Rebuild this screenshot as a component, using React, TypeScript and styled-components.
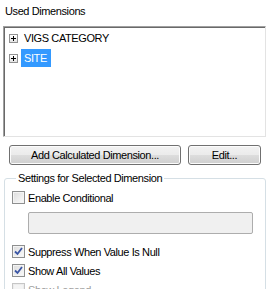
import React from "react";
import styled, {createGlobalStyle} from "styled-components";

const GlobalStyle = createGlobalStyle`
  body {
    margin: 0;
    background: #fff;
    font-family: "Liberation Sans", Arial, sans-serif;
    font-size: 11px;
    letter-spacing: -0.4px;
    color: #000;
  }
`;

const Panel = styled.div`
  width: 275px;
  height: 289px;
  overflow: hidden;
  padding-top: 5px;
  box-sizing: border-box;
`;

const Title = styled.div`
  padding-left: 5px;
  line-height: 13px;
  height: 13px;
`;

const ListBox = styled.div`
  margin: 8px 0 0 3px;
  width: 263px;
  height: 111px;
  box-sizing: border-box;
  border: 1px solid;
  border-color: #a0a0a0 #e3e3e3 #e3e3e3 #a0a0a0;
  box-shadow: inset 1px 1px 0 #696969;
  padding: 1px 0 0 1px;
`;

const TreeRow = styled.div`
  display: flex;
  align-items: center;
  height: 20px;
  padding-left: 4px;
`;

const Expander = styled.span`
  width: 9px;
  height: 9px;
  box-sizing: border-box;
  border: 1px solid #919191;
  background: linear-gradient(#fff, #e4e4e4);
  position: relative;
  margin-right: 3px;
  &::before, &::after {
    content: "";
    position: absolute;
    background: #000;
  }
  &::before { left: 1px; top: 3px; width: 5px; height: 1px; }
  &::after { left: 3px; top: 1px; width: 1px; height: 5px; }
`;

const NodeLabel = styled.span<{ $selected?: boolean }>`
  padding: 0 4px 0 3px;
  line-height: 18px;
  background: ${p => p.$selected ? '#3399ff' : 'transparent'};
  color: ${p => p.$selected ? '#fff' : '#000'};
`;

const ButtonRow = styled.div`
  display: flex;
  gap: 7px;
  margin-top: 8px;
  padding-left: 9px;
`;

const Button = styled.div<{ $width: number }>`
  width: ${p => p.$width}px;
  height: 20px;
  box-sizing: border-box;
  border: 1px solid #707070;
  border-radius: 3px;
  background: linear-gradient(#f2f2f2 0%, #ebebeb 50%, #dddddd 51%, #cfcfcf 100%);
  box-shadow: inset 0 0 0 1px #fcfcfc;
  display: flex;
  align-items: center;
  justify-content: center;
`;

const Group = styled.fieldset`
  margin: 7px 0 0 4px;
  width: 262px;
  box-sizing: border-box;
  border: 1px solid #d5dfe5;
  border-radius: 3px;
  padding: 3px 0 10px 7px;
  min-width: 0;
`;

const Legend = styled.legend`
  padding: 0 2px;
  margin-left: 4px;
  line-height: 13px;
`;

const CheckRow = styled.label<{ $disabled?: boolean }>`
  display: flex;
  align-items: center;
  height: 19px;
  gap: 3px;
  color: ${p => p.$disabled ? '#9c9c9c' : '#000'};
`;

const Box = styled.span<{ $disabled?: boolean }>`
  width: 13px;
  height: 13px;
  box-sizing: border-box;
  border: 1px solid ${p => p.$disabled ? '#c6c6c6' : '#8e8f8f'};
  background: ${p => p.$disabled ? '#f4f4f4' : 'linear-gradient(135deg, #dcdcdc, #fbfbfb)'};
  box-shadow: inset 0 0 0 1px ${p => p.$disabled ? '#ececec' : '#f4f4f4'};
  display: flex;
  align-items: center;
  justify-content: center;
`;

const TextInput = styled.div`
  margin: 5px 0 8px 16px;
  width: 225px;
  height: 22px;
  box-sizing: border-box;
  border: 1px solid #adadad;
  border-radius: 2px;
  background: #f0f0f0;
`;

const Check = ({checked, disabled}: { checked?: boolean; disabled?: boolean }) => (
    <Box $disabled={disabled}>
        {checked && (
            <svg width="9" height="9" viewBox="0 0 9 9">
                <path d="M1 4.5 L3.5 7 L8 1" fill="none" stroke="#3b56a5" strokeWidth="1.8"/>
            </svg>
        )}
    </Box>
);

export default function App() {
    return (
        <>
            <GlobalStyle/>
            <Panel>
                <Title>Used Dimensions</Title>
                <ListBox>
                    <TreeRow>
                        <Expander/>
                        <NodeLabel>VIGS CATEGORY</NodeLabel>
                    </TreeRow>
                    <TreeRow>
                        <Expander/>
                        <NodeLabel $selected>SITE</NodeLabel>
                    </TreeRow>
                </ListBox>
                <ButtonRow>
                    <Button $width={172}>Add Calculated Dimension...</Button>
                    <Button $width={73}>Edit...</Button>
                </ButtonRow>
                <Group>
                    <Legend>Settings for Selected Dimension</Legend>
                    <CheckRow><Check/>Enable Conditional</CheckRow>
                    <TextInput/>
                    <CheckRow><Check checked/>Suppress When Value Is Null</CheckRow>
                    <CheckRow><Check checked/>Show All Values</CheckRow>
                    <CheckRow $disabled><Check disabled/>Show Legend</CheckRow>
                </Group>
            </Panel>
        </>
    );
}
